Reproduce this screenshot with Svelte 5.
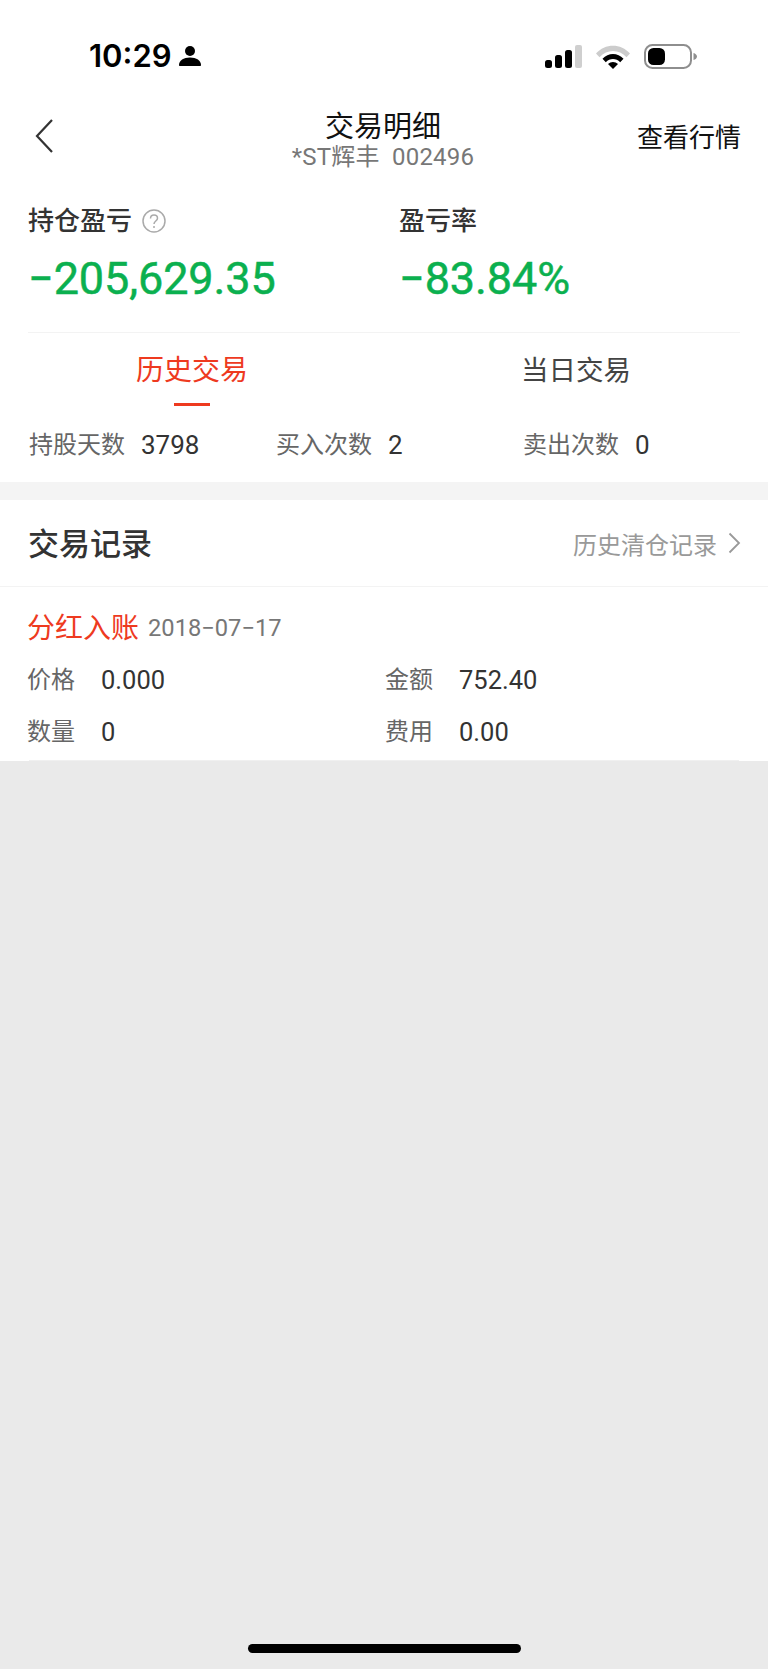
<script>
const stats = [
	{ label: "持股天数", value: "3798" },
	{ label: "买入次数", value: "2" },
	{ label: "卖出次数", value: "0" }
];
const summary = [
	{ label: "持仓盈亏", value: "−205,629.35", help: true },
	{ label: "盈亏率", value: "−83.84%", help: false }
];
const details = [
	{ label: "价格", value: "0.000" },
	{ label: "金额", value: "752.40" },
	{ label: "数量", value: "0" },
	{ label: "费用", value: "0.00" }
];
</script>

<main>
	<div class="top">
		<div class="status">
			<div class="clock">
				<span>10:29</span>
				<svg width="22" height="22" viewBox="0 0 22 22"><circle cx="11" cy="6" r="5"/><path d="M1 21c-.6 0-1-.4-1-1 0-4.500 4.500-7.500 11-7.500S22 15.500 22 20c0 .6-.4 1-1 1z"/></svg>
			</div>
			<div class="indicators">
				<svg width="37" height="24" viewBox="0 0 37 24">
					<rect x="0" y="15" width="7" height="8" rx="2.500"/>
					<rect x="10" y="10" width="7" height="13" rx="2.500"/>
					<rect x="20" y="5" width="7" height="18" rx="2.500"/>
					<rect x="30" y="0" width="7" height="23" rx="2" fill="#cfcfcf"/>
				</svg>
				<svg width="34" height="25" viewBox="0 0 34 25">
					<path d="M0 9.500C9-1 25-1 34 9.500l-3.500 3.800C23 5 11 5 3.500 13.300z" fill="#cccccc"/>
					<path d="M6.500 14.800c5.800-6.300 15.200-6.300 21 0l-3.300 3.500c-4-4.300-10.400-4.300-14.400 0z"/>
					<path d="M12 20c2.800-2.800 7.200-2.800 10 0l-5 5z"/>
				</svg>
				<svg width="53" height="25" viewBox="0 0 53 25">
					<rect x="1" y="1" width="46" height="23" rx="7.500" fill="none" stroke="#8e8e8e" stroke-width="2"/>
					<rect x="4" y="4" width="17" height="17" rx="5.500"/>
					<path d="M49.500 9c2 .5 3.500 2 3.500 3.500s-1.500 3-3.500 3.500z" fill="#8e8e8e"/>
				</svg>
			</div>
		</div>

		<nav class="navbar">
			<svg class="back" width="18" height="34" viewBox="0 0 18 34"><path d="M17 1 2 17l15 16" fill="none" stroke="#333" stroke-width="2.200"/></svg>
			<div class="heading">
				<div class="title">交易明细</div>
				<div class="code">*ST辉丰&nbsp;&nbsp;002496</div>
			</div>
			<div class="market">查看行情</div>
		</nav>

		<section class="summary">
			{#each summary as item}
				<div class="metric">
					<div class="metric-label">
						{item.label}
						{#if item.help}
							<svg width="24" height="24" viewBox="0 0 24 24"><circle cx="12" cy="12" r="11" fill="none" stroke="#aaa" stroke-width="1.500"/><path d="M8.500 9.500C8.500 7.500 10 6 12 6s3.500 1.400 3.500 3.200c0 2.800-3.500 2.800-3.500 5.800" fill="none" stroke="#aaa" stroke-width="1.500"/><circle cx="12" cy="18" r="1" fill="#aaa"/></svg>
						{/if}
					</div>
					<div class="metric-value">{item.value}</div>
				</div>
			{/each}
		</section>

		<div class="tabs">
			<div class="tab active">历史交易</div>
			<div class="tab">当日交易</div>
		</div>

		<div class="stats">
			{#each stats as s}
				<div class="stat"><span class="stat-label">{s.label}</span><span class="stat-value">{s.value}</span></div>
			{/each}
		</div>
	</div>

	<div class="band"></div>

	<section class="records">
		<header class="records-head">
			<h2>交易记录</h2>
			<div class="history">
				历史清仓记录
				<svg width="13" height="22" viewBox="0 0 13 22"><path d="M1.500 1.500 11 11l-9.500 9.500" fill="none" stroke="#999" stroke-width="1.800"/></svg>
			</div>
		</header>
		<div class="record">
			<div class="record-title"><span class="kind">分红入账</span><span class="date">2018−07−17</span></div>
			<div class="record-grid">
				{#each details as d}
					<div class="cell"><span class="cell-label">{d.label}</span><span class="cell-value">{d.value}</span></div>
				{/each}
			</div>
		</div>
		<div class="record-end"></div>
	</section>

	<div class="rest">
		<div class="home-bar"></div>
	</div>
</main>

<style>
:global(body) {
	margin: 0;
	background: #eaeaea;
}

main {
	width: 768px;
	height: 1669px;
	display: flex;
	flex-direction: column;
	font-family: Roboto, "Noto Sans CJK SC", sans-serif;
	color: #333;
}

.top {
	background: #fff;
	height: 482px;
	overflow: hidden;
}

.status {
	height: 107px;
	box-sizing: border-box;
	padding: 42px 71px 0 89px;
	display: flex;
	justify-content: space-between;
	align-items: flex-start;
}

.clock {
	display: flex;
	align-items: center;
	gap: 7px;
	font-family: Inter, sans-serif;
	font-weight: 600;
	font-size: 31px;
	line-height: 28px;
	color: #000;
}

.indicators {
	display: flex;
	align-items: center;
	gap: 14px;
	margin-top: 2px;
}

.navbar {
	height: 64px;
	display: grid;
	grid-template-columns: 1fr auto 1fr;
	align-items: center;
	padding: 0 27px;
}

.back {
	justify-self: start;
	margin: -6px 0 0 8px;
}

.heading {
	text-align: center;
	margin-left: -2px;
}

.title {
	font-size: 29px;
	line-height: 36px;
	color: #111;
}

.code {
	font-size: 24px;
	line-height: 25px;
	letter-spacing: 0.2px;
	color: #777;
}

.market {
	justify-self: end;
	margin-top: -7px;
	font-size: 26px;
	color: #111;
}

.summary {
	margin: 32px 28px 0;
	height: 130px;
	box-sizing: border-box;
	display: grid;
	grid-template-columns: 371px 1fr;
	border-bottom: 1px solid #f3f3f3;
}

.metric-label {
	display: flex;
	align-items: center;
	gap: 10px;
	font-size: 26px;
	line-height: 36px;
	font-weight: 500;
}

.metric-value {
	margin-top: 14px;
	font-size: 45px;
	line-height: 52px;
	font-weight: 400;
	letter-spacing: -0.1px;
	-webkit-text-stroke: 0.5px #0bb04f;
	color: #0bb04f;
}

.tabs {
	display: grid;
	grid-template-columns: 1fr 1fr;
	height: 72px;
}

.tab {
	font-size: 27.500px;
	line-height: 76px;
	text-align: center;
	color: #444;
	position: relative;
}

.tab.active {
	font-size: 28px;
	color: #ee3a1f;
}

.tab.active::after {
	content: "";
	position: absolute;
	left: 50%;
	bottom: 3px;
	width: 36px;
	height: 3px;
	margin-left: -18px;
	background: #ee3a1f;
}

.stats {
	display: grid;
	grid-template-columns: repeat(3, 247px);
	padding: 0 29px;
	margin-top: 23px;
}

.stat {
	font-size: 24px;
	line-height: 34px;
	display: flex;
	gap: 16px;
}

.stat-label { color: #666; }

.stat-value {
	color: #333;
	font-size: 26px;
}

.band {
	height: 18px;
	background: #f4f4f4;
}

.records {
	background: #fff;
	height: 261px;
	box-sizing: border-box;
}

.records-head {
	height: 87px;
	box-sizing: border-box;
	padding: 0 27px 0 28px;
	display: flex;
	justify-content: space-between;
	align-items: center;
	border-bottom: 1px solid #f3f3f3;
}

h2 {
	margin: -3px 0 0;
	font-size: 31px;
	font-weight: 500;
}

.history {
	display: flex;
	align-items: center;
	gap: 11px;
	font-size: 24px;
	color: #999;
}

.record {
	padding: 0 29px 0 27px;
	height: 173px;
	box-sizing: border-box;
}

.record-title {
	display: flex;
	align-items: center;
	gap: 9px;
	height: 78px;
}

.kind {
	font-size: 28px;
	color: #ee3a1f;
}

.date {
	margin-top: 3px;
	font-size: 23.700px;
	color: #777;
}

.record-grid {
	display: grid;
	grid-template-columns: 358px 1fr;
	row-gap: 18px;
	margin-top: -2px;
}

.cell {
	display: flex;
	gap: 26px;
	font-size: 24px;
	line-height: 34px;
}

.cell-label { color: #666; }

.cell-value { font-size: 25.500px; }

.record-end {
	height: 1px;
	margin: 0 29px;
	background: #f0f0f0;
}

.rest {
	flex: 1;
	background: #eaeaea;
	display: flex;
	justify-content: center;
	align-items: flex-end;
}

.home-bar {
	width: 273px;
	height: 9px;
	border-radius: 5px;
	background: #000;
	margin-bottom: 16px;
}
</style>
